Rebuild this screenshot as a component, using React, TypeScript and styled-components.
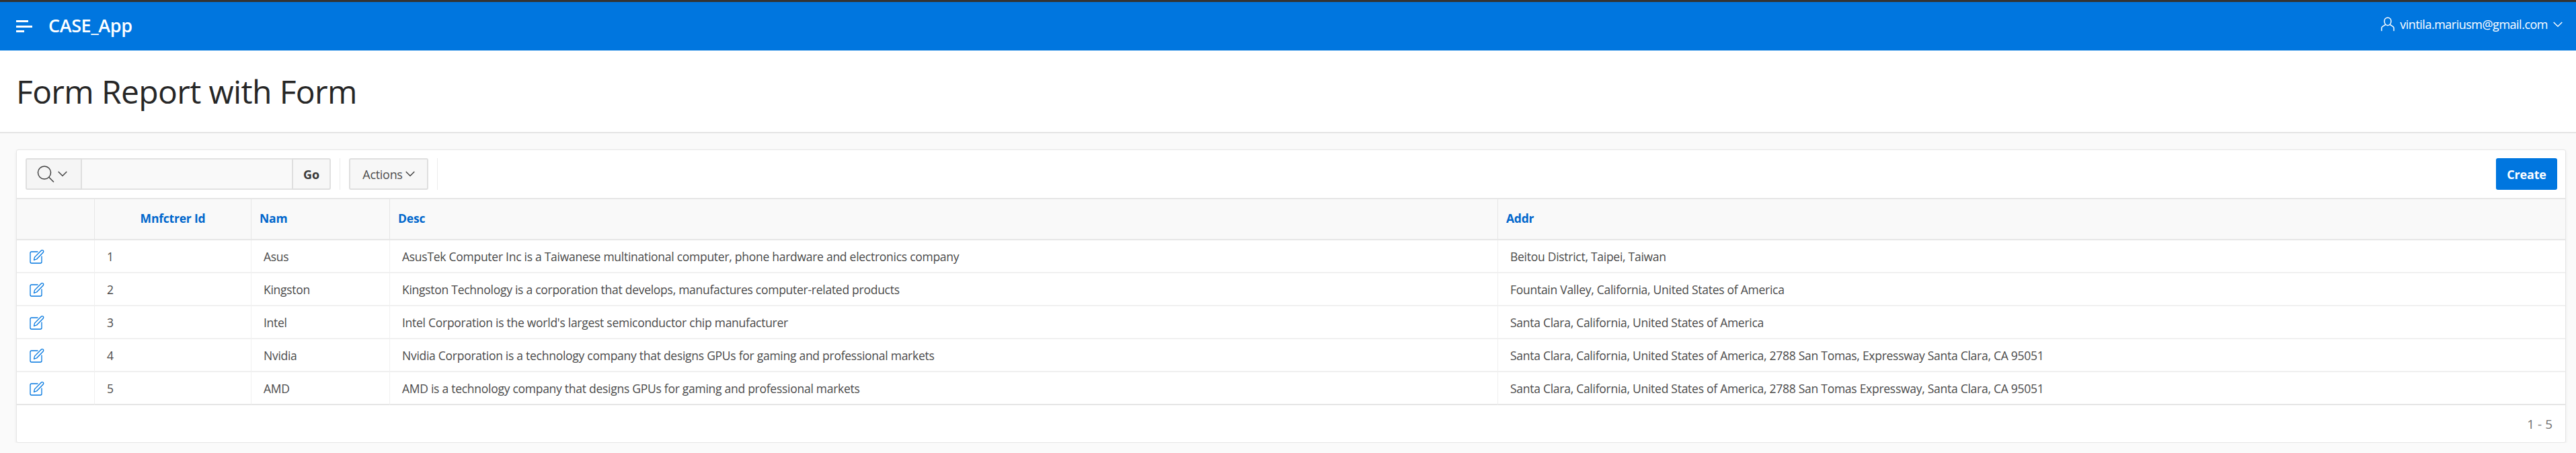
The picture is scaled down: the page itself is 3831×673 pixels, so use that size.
import React from "react";
import styled, { createGlobalStyle } from "styled-components";

const Global = createGlobalStyle`
  html, body { margin: 0; padding: 0; background: #fafafa; }
  body { font-family: "Open Sans", "Noto Sans", "Liberation Sans", sans-serif; color: #262626; }
`;

const TopStrip = styled.div`height: 3px; background: #333;`;
const Header = styled.header`
  height: 72px; background: #0076df; color: #fff; display: flex; align-items: center;
  padding: 0 20px 0 24px;
`;
const Brand = styled.div`
  margin-left: 24px; font-size: 27px; font-weight: 600; letter-spacing: -0.4px; line-height: 32px; margin-top: -3px;
`;
const UserBox = styled.div`
  margin-left: auto; display: flex; align-items: center; font-size: 18px; letter-spacing: -0.5px; margin-top: -6px;
`;
const UserName = styled.span`margin: 0 8px 0 8px;`;
const Hero = styled.div`
  height: 121px; background: #fff; border-bottom: 2px solid #e4e4e4; display: flex; align-items: center; padding-left: 24px;
`;
const Title = styled.h1`
  margin: 0; font-size: 48px; font-weight: 500; letter-spacing: -0.64px; line-height: 64px; color: #262626;
`;
const Body = styled.main`padding: 24px 15px 0 24px;`;
const Card = styled.section`
  background: #fff; border: 1px solid #e6e6e6; border-radius: 3px; box-shadow: 0 2px 4px rgba(0,0,0,.07);
  height: 436px; box-sizing: border-box; overflow: hidden; display: flex; flex-direction: column;
`;
const Toolbar = styled.div`
  height: 73px; box-sizing: border-box; padding: 12px 12px 12px 13px; display: flex; align-items: stretch; border-bottom: 2px solid #e6e6e6;
`;
const SearchGroup = styled.div`display: flex; width: 454px;`;
const SearchBtn = styled.div`
  width: 84px; box-sizing: border-box; border: 2px solid #dfdfdf; border-radius: 3px 0 0 3px; background: #f5f5f5;
  display: flex; align-items: center; padding-left: 15px; gap: 5px;
`;
const SearchInput = styled.div`
  flex: 1; background: #f9f9f9; border-top: 2px solid #e2e2e2; border-bottom: 2px solid #e2e2e2;
`;
const GoBtn = styled.div`
  width: 58px; box-sizing: border-box; border: 2px solid #dfdfdf; border-radius: 0 3px 3px 0; background: #f7f7f7;
  display: flex; align-items: center; justify-content: center; font-size: 18px; font-weight: 700; color: #383838;
`;
const Sep = styled.div`width: 1px; background: #ececec; margin: 0 13px;`;
const ActionsBtn = styled.div`
  width: 118px; box-sizing: border-box; border: 2px solid #dfdfdf; border-radius: 3px; background: #f7f7f7;
  display: flex; align-items: center; justify-content: center; gap: 4px; font-size: 18px; color: #4c4c4c; letter-spacing: -0.3px;
`;
const CreateBtn = styled.div`
  margin-left: auto; width: 91px; border-radius: 3px; background: #0076df; color: #fff;
  display: flex; align-items: center; justify-content: center; font-size: 18px; font-weight: 700; letter-spacing: -0.2px;
`;
const Table = styled.table`
  width: 100%; table-layout: fixed; border-collapse: separate; border-spacing: 0;
`;
const Th = styled.th<{ $center?: boolean }>`
  height: 55px; padding: 0 0 4px ${(p) => (p.$center ? "0" : "12px")}; background: #f9f9f9; border-bottom: 2px solid #e6e6e6; border-left: 1px solid #e6e6e6;
  text-align: ${(p) => (p.$center ? "center" : "left")}; font-size: 17.5px; font-weight: 700; color: #0066cc; letter-spacing: -0.2px;
  &:first-child { border-left: 0; }
`;
const Td = styled.td`
  height: 47px; padding: 0 0 0 18px; border-bottom: 2px solid #f0f0f0; border-left: 1px solid #f0f0f0;
  font-size: 17.5px; color: #4a4a4a; letter-spacing: -0.27px; white-space: nowrap; overflow: hidden;
  &:first-child { border-left: 0; padding-left: 19px; }
`;
const LastRow = styled.tr`
  & > td { border-bottom-color: #e6e6e6; }
`;
const Footer = styled.div`
  flex: 1; display: flex; align-items: center; justify-content: flex-end; padding: 0 19px 0 0; font-size: 19px; color: #707070;
`;
const IconLink = styled.a`display: flex; color: #0076df;`;

const Menu = () => (
  <svg width="24" height="18" viewBox="0 0 24 18" fill="#fff">
    <rect x="0" y="0" width="18" height="3" />
    <rect x="0" y="8" width="24" height="3" />
    <rect x="0" y="15" width="12" height="3" />
  </svg>
);
const User = () => (
  <svg width="20" height="22" viewBox="0 0 20 22" fill="none" stroke="#fff" strokeWidth="1.5" strokeLinecap="round">
    <path d="M10 1.2c3 0 5 2.4 5 5.3 0 3.4-2.2 6.2-5 6.2s-5-2.8-5-6.2c0-2.9 2-5.3 5-5.3z" />
    <path d="M6.6 11.6L2 14.6c-.8.5-1.1 1.2-1.1 2.2v3.6M13.4 11.6l4.6 3c.8.5 1.1 1.2 1.1 2.2v3.6" />
  </svg>
);
const Chevron = ({ size, color }: { size: number; color: string }) => (
  <svg width={size} height={size * 0.6} viewBox="0 0 14 8" fill="none" stroke={color} strokeWidth="1.4">
    <path d="M.7.7L7 7l6.3-6.3" />
  </svg>
);
const Search = () => (
  <svg width="26" height="26" viewBox="0 0 26 26" fill="none" stroke="#404040" strokeWidth="1.5">
    <circle cx="11" cy="10.5" r="9.5" />
    <path d="M18 17.5l7 7" />
  </svg>
);
const Edit = () => (
  <svg width="22" height="22" viewBox="0 0 22 22" fill="none" stroke="#0076df" strokeWidth="1.3" strokeLinejoin="round" strokeLinecap="round">
    <path d="M12 4H3a2 2 0 0 0-2 2v13a2 2 0 0 0 2 2h13a2 2 0 0 0 2-2v-8" />
    <path d="M17.3 2.2a2 2 0 0 1 2.9 2.8L10.5 15l-4 1.3 1-4.2z" />
  </svg>
);

const rows = [
  ["1", "Asus", "AsusTek Computer Inc is a Taiwanese multinational computer, phone hardware and electronics company", "Beitou District, Taipei, Taiwan"],
  ["2", "Kingston", "Kingston Technology is a corporation that develops, manufactures computer-related products", "Fountain Valley, California, United States of America"],
  ["3", "Intel", "Intel Corporation is the world's largest semiconductor chip manufacturer", "Santa Clara, California, United States of America"],
  ["4", "Nvidia", "Nvidia Corporation is a technology company that designs GPUs for gaming and professional markets", "Santa Clara, California, United States of America, 2788 San Tomas, Expressway Santa Clara, CA 95051"],
  ["5", "AMD", "AMD is a technology company that designs GPUs for gaming and professional markets", "Santa Clara, California, United States of America, 2788 San Tomas Expressway, Santa Clara, CA 95051"],
];

export default function App() {
  return (
    <>
      <Global />
      <TopStrip />
      <Header>
        <Menu />
        <Brand>CASE_App</Brand>
        <UserBox>
          <User />
          <UserName>vintila.mariusm@gmail.com</UserName>
          <Chevron size={14} color="#fff" />
        </UserBox>
      </Header>
      <Hero>
        <Title>Form Report with Form</Title>
      </Hero>
      <Body>
        <Card>
          <Toolbar>
            <SearchGroup>
              <SearchBtn>
                <Search />
                <Chevron size={14} color="#404040" />
              </SearchBtn>
              <SearchInput />
              <GoBtn>Go</GoBtn>
            </SearchGroup>
            <Sep />
            <ActionsBtn>
              Actions
              <Chevron size={14} color="#404040" />
            </ActionsBtn>
            <Sep />
            <CreateBtn>Create</CreateBtn>
          </Toolbar>
          <Table>
            <colgroup>
              <col width="115" />
              <col width="233" />
              <col width="206" />
              <col width="1648" />
              <col />
            </colgroup>
            <thead>
              <tr>
                <Th />
                <Th $center>Mnfctrer Id</Th>
                <Th>Nam</Th>
                <Th>Desc</Th>
                <Th>Addr</Th>
              </tr>
            </thead>
            <tbody>
              {rows.map((r, i) => {
                const Row = i === rows.length - 1 ? LastRow : "tr";
                return (
                  <Row key={r[0]}>
                    <Td>
                      <IconLink><Edit /></IconLink>
                    </Td>
                    {r.map((c) => (
                      <Td key={c}>{c}</Td>
                    ))}
                  </Row>
                );
              })}
            </tbody>
          </Table>
          <Footer>1 - 5</Footer>
        </Card>
      </Body>
    </>
  );
}
